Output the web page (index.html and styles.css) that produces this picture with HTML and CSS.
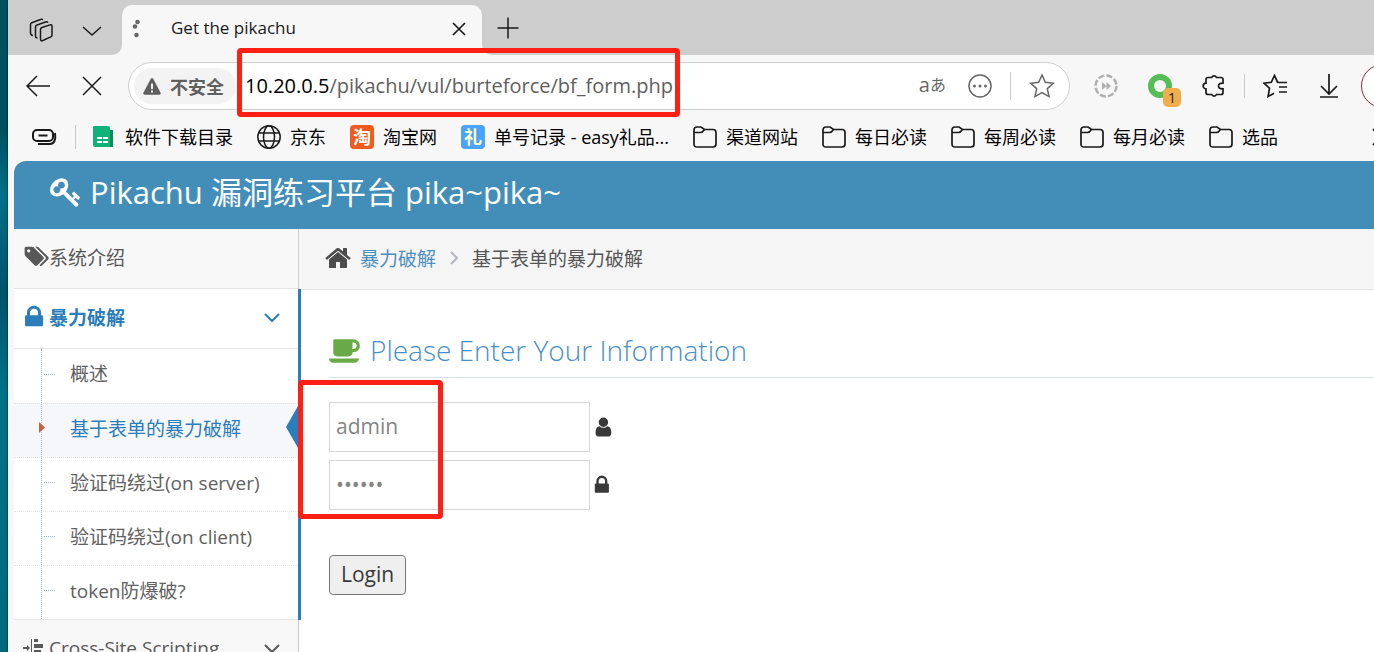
FILE: index.html
```
<!DOCTYPE html>
<html lang="zh-CN">
<head>
    <meta charset="UTF-8">
    <meta name="viewport" content="width=device-width, initial-scale=1.0">
    <title>Get the pikachu</title>
    <link rel="stylesheet" href="styles.css">
</head>
<body>
    <div class="browser">
        <div class="tab-strip">
            <div class="tab-tools">
                <button class="icon-button" aria-label="工作区">
                    <svg width="26" height="26" viewBox="0 0 26 26" class="line">
                        <path d="M12.500 12.500q0-1.500 1.500-2l8-2.600q2-.5 2 1.300v9q0 1.200-1.200 1.700l-8 3.600q-2.300.8-2.300-1.500z"/>
                        <path d="M9.500 21q-2 0-2-2v-9q0-1.500 1.500-2l8.500-3q1.800-.5 2.300.8"/>
                        <path d="M5 18.500q-2.500-.3-2.500-2.500V7.500q0-1.300 1.300-1.800l8.700-3.200q1.800-.5 2.300.5"/>
                    </svg>
                </button>
                <button class="icon-button" aria-label="标签页操作">
                    <svg width="20" height="22" viewBox="0 0 20 22" class="line"><path d="M1 8l9 8 9-8"/></svg>
                </button>
            </div>
            <div class="tab-slot">
                <div class="tab">
                    <svg width="8" height="20" viewBox="0 0 8 20" fill="#666"><circle cx="5.500" cy="3" r="2.300"/><circle cx="3" cy="7.500" r="2.300"/><circle cx="4.500" cy="16" r="2.300"/></svg>
                    <span class="tab-title">Get the pikachu</span>
                    <button class="icon-button" aria-label="关闭标签页">
                        <svg width="14" height="14" viewBox="0 0 14 14" class="line bold"><path d="M1 1l12 12M13 1L1 13"/></svg>
                    </button>
                </div>
            </div>
            <div class="tab-rest">
                <button class="icon-button" aria-label="新建标签页">
                    <svg width="22" height="22" viewBox="0 0 22 22" class="line"><path d="M11 .5v21M.5 11h21"/></svg>
                </button>
            </div>
        </div>

        <div class="toolbar">
            <button class="icon-button" aria-label="返回">
                <svg width="24" height="22" viewBox="0 0 24 22" class="line"><path d="M24 11H1M11 1L1 11l10 10"/></svg>
            </button>
            <button class="icon-button" aria-label="停止">
                <svg width="20" height="20" viewBox="0 0 20 20" class="line"><path d="M1 1l18 18M19 1L1 19"/></svg>
            </button>
            <div class="address">
                <button class="security">
                    <svg width="18" height="17" viewBox="0 0 18 17"><path fill="#5f5f5f" d="M7.700 1q1.300-2 2.600 0l7.200 13.500q.9 2-1 2.200h-15q-1.900-.2-1-2.200z"/><path stroke="#f3f3f3" stroke-width="2" d="M9 5.500v5.500M9 12.500v2"/></svg>
                    不安全
                </button>
                <div class="url-wrap">
                    <div class="url" role="textbox" aria-label="地址" contenteditable="true" spellcheck="false"><span class="host">10.20.0.5</span>/pikachu/vul/burteforce/bf_form.php</div>
                    <div class="mark mark-url"></div>
                </div>
                <div class="address-actions">
                    <button class="icon-button translate" aria-label="翻译"><span class="latin">a</span>あ</button>
                    <button class="icon-button" aria-label="更多">
                        <svg width="24" height="24" viewBox="0 0 24 24" class="line gray"><circle cx="12" cy="12" r="11"/><g fill="#666" stroke="none"><circle cx="6.500" cy="12" r="1.500"/><circle cx="12" cy="12" r="1.500"/><circle cx="17.500" cy="12" r="1.500"/></g></svg>
                    </button>
                    <span class="divider"></span>
                    <button class="icon-button" aria-label="收藏此页">
                        <svg width="26" height="26" viewBox="0 0 26 26" class="line gray"><path d="M13 2l3.300 7.300 8 .9-6 5.400 1.700 8-7-4.100-7 4.100 1.700-8-6-5.400 8-.9z"/></svg>
                    </button>
                </div>
            </div>
            <div class="extensions">
                <button class="icon-button" aria-label="倍速播放">
                    <svg width="24" height="24" viewBox="0 0 24 24" fill="#b0b0b0"><circle cx="12" cy="12" r="10.500" fill="none" stroke="#b0b0b0" stroke-width="2.500" stroke-dasharray="6.200 2.050"/><path d="M8 8l4.500 4-4.500 4zM12.500 8l4.500 4-4.500 4z"/></svg>
                </button>
                <button class="icon-button counter" aria-label="下载扩展">
                    <svg width="24" height="24" viewBox="0 0 24 24"><circle cx="12" cy="12" r="9" fill="none" stroke="#54bd54" stroke-width="6"/></svg>
                    <span class="badge">1</span>
                </button>
                <button class="icon-button" aria-label="扩展">
                    <svg width="24" height="24" viewBox="0 0 24 24" class="line bold"><path d="M6 3.500h3.700a2.600 2.600 0 0 1 4.800 0H19q2 0 2 2v3.700q-4.500-.2-4.500 2.800t4.500 2.800v3.700q0 2-2 2h-4.500a2.600 2.600 0 0 1-4.800 0H6q-2 0-2-2v-3.700a2.800 2.800 0 0 1 0-5.600V5.500q0-2 2-2z"/></svg>
                </button>
                <span class="divider short"></span>
                <button class="icon-button" aria-label="收藏夹">
                    <svg width="24" height="24" viewBox="0 0 24 24" class="line bold"><path d="M16 8.500l-1.500-.3L11.500 1.500 8.300 8.300l-7.300.9 5.500 5-1.400 8.300 6-3.300M15.500 8.500H24M16 13h8M16 18h8"/></svg>
                </button>
                <button class="icon-button download" aria-label="下载">
                    <svg width="20" height="24" viewBox="0 0 20 24" class="line bold"><path d="M10 0v19M2 12l8 8 8-8M1 23h18"/></svg>
                </button>
                <button class="profile" aria-label="个人资料"></button>
            </div>
        </div>

        <nav class="bookmarks">
            <button class="icon-button" aria-label="侧边栏">
                <svg width="26" height="20" viewBox="0 0 26 20" class="line"><rect x="2" y="3" width="20" height="11" rx="4" stroke-width="2"/><path stroke-width="2" d="M7.500 8.500h9M24 6q1.500 10.500-5 11H7"/></svg>
            </button>
            <span class="divider short"></span>
            <a href="#">
                <svg width="24" height="24" viewBox="0 0 24 24"><path fill="#0a8a55" d="M17 5h4v17h-4z"/><path fill="#10b27a" d="M1 2q0-1 1-1h14q2 0 2 2v19H3q-2 0-2-2z"/><path fill="#fff" d="M5 12h5v2H5zM11 12h5v2h-5zM5 16h5v2H5zM11 16h5v2h-5z"/></svg>
                软件下载目录
            </a>
            <a href="#">
                <svg width="24" height="24" viewBox="0 0 24 24" class="line"><circle cx="12" cy="12" r="11.200"/><ellipse cx="12" cy="12" rx="5.500" ry="11.200"/><path d="M2 8h20M2 16h20"/></svg>
                京东
            </a>
            <a href="#"><span class="site-icon taobao">淘</span>淘宝网</a>
            <a href="#"><span class="site-icon gift">礼</span>单号记录 - easy礼品...</a>
            <a href="#"><svg width="24" height="24" class="line bold"><use href="#folder"/></svg>渠道网站</a>
            <a href="#"><svg width="24" height="24" class="line bold"><use href="#folder"/></svg>每日必读</a>
            <a href="#"><svg width="24" height="24" class="line bold"><use href="#folder"/></svg>每周必读</a>
            <a href="#"><svg width="24" height="24" class="line bold"><use href="#folder"/></svg>每月必读</a>
            <a href="#"><svg width="24" height="24" class="line bold"><use href="#folder"/></svg>选品</a>
            <button class="icon-button more" aria-label="更多收藏">
                <svg width="8" height="20" viewBox="0 0 8 20" class="line bold"><path d="M1 2l7 8-7 8"/></svg>
            </button>
        </nav>

        <div class="page">
            <header class="navbar">
                <svg width="32" height="32" viewBox="0 0 1792 1792" fill="#fff"><path d="M832 512q0-80-56-136t-136-56-136 56-56 136q0 42 19 83-41-19-83-19-80 0-136 56t-56 136 56 136 136 56 136-56 56-136q0-42-19-83 41 19 83 19 80 0 136-56t56-136zm851 704q0 17-49 66t-66 49q-9 0-28.500-16t-36.500-33-38.500-40-24.500-26l-96 96 220 220q28 28 28 68 0 42-39 81t-81 39q-40 0-68-28l-671-671q-176 131-365 131-163 0-265.500-102.500t-102.500-265.500q0-160 95-313t248-248 313-95q163 0 265.500 102.500t102.500 265.500q0 189-131 365l355 355 96-96q-3-3-26-24.500t-40-38.500-33-36.500-16-28.500q0-17 49-66t66-49q13 0 23 10 6 6 46 44.500t82 79.500 86.500 86 73 78 28.500 41z"/></svg>
                <span>Pikachu 漏洞练习平台 pika~pika~</span>
            </header>
            <div class="main">
                <aside class="sidebar">
                    <ul class="menu">
                        <li>
                            <a href="#" class="menu-link">
                                <svg width="26" height="23" viewBox="0 0 2048 1792"><path d="M576 448q0-53-37.500-90.500t-90.500-37.500-90.500 37.500-37.500 90.500 37.500 90.500 90.500 37.500 90.500-37.500 37.500-90.500zm1067 576q0 53-37 90l-491 492q-39 37-91 37-53 0-90-37l-715-716q-38-37-64.500-101t-26.500-117v-416q0-52 38-90t90-38h416q53 0 117 26.500t102 64.500l715 714q37 39 37 91zm384 0q0 53-37 90l-491 492q-39 37-91 37-36 0-59-14t-53-45l470-470q37-37 37-90 0-52-37-91l-715-714q-38-38-102-64.500t-117-26.500h224q53 0 117 26.500t102 64.500l715 714q37 39 37 91z"/></svg>
                                <span>系统介绍</span>
                            </a>
                        </li>
                        <li class="open">
                            <a href="#" class="menu-link">
                                <svg width="26" height="26" viewBox="128 0 1792 1792"><path d="M640 768h512v-192q0-106-75-181t-181-75-181 75-75 181v192zm832 96v576q0 40-28 68t-68 28h-960q-40 0-68-28t-28-68v-576q0-40 28-68t68-28h32v-192q0-184 132-316t316-132 316 132 132 316v192h32q40 0 68 28t28 68z" transform="translate(-80 0) scale(1.080 1)"/></svg>
                                <span>暴力破解</span>
                                <svg class="arrow" width="16" height="10" viewBox="0 0 16 10"><path d="M1 1l7 7 7-7"/></svg>
                            </a>
                            <ul class="submenu">
                                <li><a href="#">概述</a></li>
                                <li class="active"><a href="#">基于表单的暴力破解</a></li>
                                <li><a href="#">验证码绕过(on server)</a></li>
                                <li><a href="#">验证码绕过(on client)</a></li>
                                <li><a href="#">token防爆破?</a></li>
                            </ul>
                        </li>
                        <li>
                            <a href="#" class="menu-link">
                                <svg width="26" height="24" viewBox="0 0 26 24"><path d="M0 11h4V9l3 3-3 3v-2H0zM8 3h1v20H8zM11 3h4v3h-4zM11 8h9v4h-9zM11 14h7v2h-7zM11 18h9v3h-9z"/></svg>
                                <span>Cross-Site Scripting</span>
                                <svg class="arrow" width="16" height="10" viewBox="0 0 16 10"><path d="M1 1l7 7 7-7"/></svg>
                            </a>
                        </li>
                    </ul>
                </aside>
                <main class="content">
                    <div class="breadcrumb">
                        <svg width="28" height="28" viewBox="64 0 1664 1792" fill="#4c4c4c"><path d="M1472 992v480q0 26-19 45t-45 19h-384v-384h-256v384h-384q-26 0-45-19t-19-45v-480q0-1 .5-3t.5-3l575-474 575 474q1 2 1 6zm223-69l-62 74q-8 9-21 11h-3q-13 0-21-7l-692-577-692 577q-12 8-24 7-13-2-21-11l-62-74q-8-10-7-23.500t11-21.500l719-599q32-26 76-26t76 26l244 204v-195q0-14 9-23t23-9h192q14 0 23 9t9 23v408l219 182q10 8 11 21.500t-7 23.500z"/></svg>
                        <a href="#">暴力破解</a>
                        <svg width="8" height="14" viewBox="0 0 8 14" fill="none" stroke="#b2b6bf" stroke-width="2"><path d="M1 1l6 6-6 6"/></svg>
                        <span>基于表单的暴力破解</span>
                    </div>
                    <div class="login">
                        <h4>
                            <svg width="32" height="30" viewBox="0 0 1920 1792" fill="#69aa46"><path d="M1664 640q0-80-56-136t-136-56h-64v384h64q80 0 136-56t56-136zm-1664 768h1792q0 106-75 181t-181 75h-1280q-106 0-181-75t-75-181zm1856-768q0 159-112.500 271.500t-271.500 112.500h-64v32q0 92-66 158t-158 66h-704q-92 0-158-66t-66-158v-736q0-26 19-45t45-19h1152q159 0 271.500 112.500t112.500 271.500z"/></svg>
                            Please Enter Your Information
                        </h4>
                        <form onsubmit="return false">
                            <div class="fields">
                                <label>
                                    <input type="text" name="username" value="admin" aria-label="Username">
                                    <svg width="22" height="22" viewBox="128 0 1792 1792"><path d="M1536 1399q0 109-62.500 187t-150.500 78h-854q-88 0-150.500-78t-62.500-187q0-85 8.500-160.500t31.500-152 58.500-131 94-89 134.500-34.500q131 128 313 128t313-128q76 0 134.500 34.500t94 89 58.500 131 31.500 152 8.500 160.500zm-256-887q0 159-112.500 271.500t-271.500 112.500-271.500-112.500-112.500-271.500 112.500-271.500 271.500-112.500 271.500 112.500 112.500 271.500z"/></svg>
                                </label>
                                <label>
                                    <input type="password" name="password" value="123456" aria-label="Password">
                                    <svg width="22" height="22" viewBox="256 0 1792 1792"><path d="M640 768h512v-192q0-106-75-181t-181-75-181 75-75 181v192zm832 96v576q0 40-28 68t-68 28h-960q-40 0-68-28t-28-68v-576q0-40 28-68t68-28h32v-192q0-184 132-316t316-132 316 132 132 316v192h32q40 0 68 28t28 68z"/></svg>
                                </label>
                                <div class="mark mark-fields"></div>
                            </div>
                            <button type="submit" class="submit">Login</button>
                        </form>
                    </div>
                </main>
            </div>
        </div>
    </div>

    <svg width="0" height="0" class="symbols">
        <symbol id="folder" viewBox="0 0 24 24"><path d="M1 8V5q0-3 3-3h4l3.500 2.500H20q3 0 3 3V19q0 3-3 3H4q-3 0-3-3V7.500h6.500q2 0 4-3"/></symbol>
    </svg>
</body>
</html>
```
FILE: styles.css
```
* {
    box-sizing: border-box;
}
body {
    margin: 0;
    height: 100vh;
    overflow: hidden;
    background: linear-gradient(#00505f, #00505f 20%, #007089 30%, #005468 45%, #007186 60%, #006a7c);
    font-family: "Open Sans", "Noto Sans CJK SC", sans-serif;
    color: #393939;
}
button {
    font-family: inherit;
}
a {
    text-decoration: none;
}
svg {
    flex: none;
    display: block;
}
.symbols {
    position: absolute;
}
.line {
    fill: none;
    stroke: #1a1a1a;
    stroke-width: 1.5;
}
.line.bold {
    stroke-width: 1.7;
}
.line.gray {
    stroke: #666;
}
.icon-button {
    display: flex;
    align-items: center;
    flex: none;
    padding: 0;
    border: 0;
    background: none;
}
.divider {
    flex: none;
    width: 1px;
    height: 28px;
    background: #c8c8c8;
}
.divider.short {
    height: 24px;
}

/* browser */
.browser {
    display: flex;
    flex-direction: column;
    height: 100%;
    margin-left: 8px;
    background: #f7f7f7;
    overflow: hidden;
    box-shadow: 0 0 2px #001a22;
}
.tab-strip {
    display: flex;
    flex: none;
    height: 55px;
}
.tab-tools,
.tab-slot,
.tab-rest {
    background: #cdcdcd;
}
.tab-tools {
    display: flex;
    align-items: center;
    gap: 28px;
    width: 114px;
    padding: 4px 0 0 20px;
    border-bottom-right-radius: 10px;
}
.tab-slot {
    width: 360px;
    padding-top: 5px;
}
.tab {
    display: flex;
    align-items: center;
    height: 100%;
    padding: 0 16px 2px 10px;
    border-radius: 10px 10px 0 0;
    background: #f7f7f7;
}
.tab-title {
    flex: 1;
    padding: 0 0 2px 31px;
    font-size: 17px;
    line-height: 24px;
    color: #1a1a1a;
}
.tab-rest {
    display: flex;
    align-items: center;
    flex: 1;
    padding-left: 15px;
    border-bottom-left-radius: 10px;
}
.toolbar {
    display: flex;
    align-items: center;
    flex: none;
    gap: 32px;
    padding: 7px 0 3px 18px;
}
.address {
    display: flex;
    align-items: center;
    flex: 1;
    height: 48px;
    margin-left: -6px;
    padding: 0 14px 0 5px;
    border: 1px solid #cfcfcf;
    border-radius: 24px;
    background: #fff;
}
.security {
    display: flex;
    align-items: center;
    gap: 9px;
    flex: none;
    height: 36px;
    padding: 0 12px 0 9px;
    border: 0;
    border-radius: 18px;
    background: #f3f3f3;
    font-size: 18px;
    font-weight: 700;
    color: #5f5f5f;
}
.url-wrap {
    position: relative;
    flex: 1;
    padding-left: 9px;
}
.url {
    font-size: 20px;
    line-height: 28px;
    white-space: nowrap;
    color: #5f5f5f;
    outline: 0;
}
.host {
    color: #000;
}
.address-actions {
    display: flex;
    align-items: center;
    gap: 18px;
}
.translate {
    padding-bottom: 2px;
    margin-right: 4px;
    font-size: 16px;
    line-height: 24px;
    color: #666;
}
.latin {
    font-size: 20px;
}
.extensions {
    display: flex;
    align-items: center;
    flex: none;
    gap: 18px;
    width: 280px;
    margin-left: -8px;
}
.counter {
    position: relative;
    margin: 0 12px;
}
.badge {
    position: absolute;
    left: 15px;
    top: 14px;
    width: 18px;
    height: 19px;
    border-radius: 5px;
    background: #f0ad4e;
    font-size: 14px;
    line-height: 19px;
    color: #222;
}
.download {
    margin: 0 4px 0 14px;
}
.profile {
    flex: none;
    width: 44px;
    height: 44px;
    border: 1px solid #a4262c;
    border-radius: 50%;
    background: #fff;
}
.bookmarks {
    display: flex;
    align-items: center;
    flex: none;
    gap: 24px;
    height: 48px;
    padding-left: 23px;
}
.bookmarks .divider {
    margin: 0 -8px 0 -6px;
}
.bookmarks a {
    display: flex;
    align-items: center;
    flex: none;
    gap: 9px;
    font-size: 18px;
    line-height: 24px;
    color: #000;
}
.site-icon {
    width: 24px;
    height: 24px;
    border-radius: 4px;
    font-size: 18px;
    font-weight: 700;
    line-height: 24px;
    text-align: center;
    color: #fff;
}
.taobao {
    background: #f05a1c;
}
.gift {
    background: #4ba3fb;
    color: #fdffc8;
}
.more {
    margin-left: auto;
    margin-right: -6px;
}

/* page */
.page {
    display: flex;
    flex-direction: column;
    flex: 1;
    min-height: 0;
    margin-left: 6px;
    border-top-left-radius: 12px;
    background: #fff;
    overflow: hidden;
}
.navbar {
    display: flex;
    align-items: center;
    flex: none;
    gap: 8px;
    height: 68px;
    padding: 0 36px 6px;
    background: #438eb9;
    font-size: 31px;
    line-height: 40px;
    color: #fff;
}
.main {
    display: flex;
    flex: 1;
    min-height: 0;
}
.sidebar {
    flex: none;
    width: 285px;
    border-right: 1px solid #ccc;
    background: #f2f2f2;
}
.menu,
.submenu {
    margin: 0;
    padding: 0;
    list-style: none;
}
.menu-link {
    display: flex;
    align-items: center;
    height: 60px;
    padding: 0 18px 4px 9px;
    border-bottom: 1px solid #e5e5e5;
    background: #f8f8f8;
    font-size: 19px;
    color: #585858;
    fill: currentColor;
}
.arrow {
    margin: 2px 0 0 auto;
    fill: none;
    stroke: currentColor;
    stroke-width: 2;
}
.open {
    position: relative;
}
.open::after {
    content: "";
    position: absolute;
    top: 0;
    right: -3px;
    bottom: 0;
    width: 3px;
    background: #2b7dbc;
}
.open > .menu-link {
    background: #fff;
    font-weight: 700;
    color: #2b7dbc;
}
.submenu {
    position: relative;
    border-bottom: 1px solid #e5e5e5;
    background: #fff;
}
.submenu::before {
    content: "";
    position: absolute;
    top: 0;
    bottom: 0;
    left: 27px;
    border-left: 1px dotted #9dbdd6;
    z-index: 1;
}
.submenu li {
    position: relative;
}
.submenu li::before {
    content: "";
    position: absolute;
    top: 25px;
    left: 30px;
    width: 11px;
    border-top: 1px dotted #9dbdd6;
}
.submenu a {
    display: flex;
    align-items: center;
    height: 54px;
    padding: 0 0 6px 56px;
    border-top: 1px dotted #e4e4e4;
    font-size: 19px;
    color: #616161;
}
.submenu li:first-child a {
    border-top: 0;
}
.submenu .active a {
    background: #f5f7fa;
    color: #2b7dbc;
}
.submenu .active::before {
    top: 19px;
    left: 25px;
    width: 6px;
    height: 11px;
    border: 0;
    background: #c86139;
    clip-path: polygon(0 0, 100% 50%, 0 100%);
    z-index: 2;
}
.submenu .active::after {
    content: "";
    position: absolute;
    top: 3px;
    right: 0;
    width: 12px;
    height: 42px;
    background: #2b7dbc;
    clip-path: polygon(100% 0, 0 50%, 100% 100%);
}
.content {
    flex: 1;
    min-width: 0;
}
.breadcrumb {
    display: flex;
    align-items: center;
    gap: 8px;
    height: 61px;
    padding: 0 25px 2px;
    border-bottom: 1px solid #e5e5e5;
    background: #f5f5f5;
    font-size: 19px;
    color: #555;
}
.breadcrumb a {
    color: #4c8fbd;
}
.breadcrumb a,
.breadcrumb a + svg {
    margin-right: 6px;
}
.login {
    padding: 34px 0 0 30px;
}
.login h4 {
    display: flex;
    align-items: center;
    gap: 9px;
    height: 54px;
    margin: 0 0 24px;
    padding-bottom: 2px;
    border-bottom: 1px solid #d5e3ef;
    font-size: 28px;
    font-weight: 300;
    color: #478fca;
}
.fields {
    position: relative;
    display: flex;
    flex-direction: column;
    gap: 8px;
    margin-bottom: 45px;
    fill: #393939;
}
.fields label {
    display: flex;
    align-items: center;
    gap: 4px;
}
.fields input {
    width: 261px;
    height: 50px;
    padding: 0 6px 2px;
    border: 1px solid #d5d5d5;
    background: #fff;
    font-family: inherit;
    font-size: 21px;
    color: #858585;
    outline: 0;
}
.submit {
    height: 40px;
    padding: 0 11px 2px;
    border: 1px solid #767676;
    border-radius: 4px;
    background: #efefef;
    font-size: 21px;
    color: #393939;
}

/* red highlights */
.mark {
    position: absolute;
    border: 5px solid #ff2015;
    border-radius: 4px;
    pointer-events: none;
    z-index: 3;
}
.mark-url {
    top: -24px;
    left: 1px;
    width: 443px;
    height: 69px;
}
.mark-fields {
    top: -22px;
    left: -31px;
    width: 145px;
    height: 139px;
}
```
